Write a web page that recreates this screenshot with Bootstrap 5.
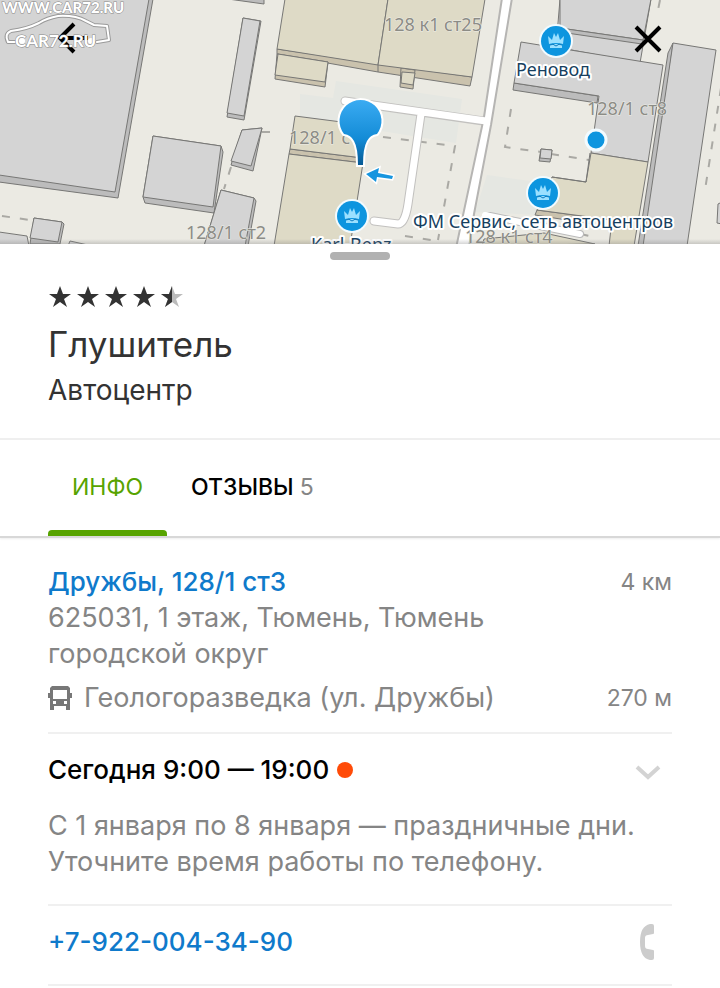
<!DOCTYPE html>
<html lang="ru">
<head>
<meta charset="utf-8">
<meta name="viewport" content="width=device-width, initial-scale=1">
<title>Глушитель — Автоцентр</title>
<link href="https://cdn.jsdelivr.net/npm/bootstrap@5.3.0/dist/css/bootstrap.min.css" rel="stylesheet">
<style>
body{font-family:"Inter","Liberation Sans",sans-serif;font-size:27px;line-height:36px;color:#858585;background:#fff}
.map{height:244px;background:#ebeae3}
.map-btn{position:absolute;top:16px;width:48px;height:48px;border:0;background:none;padding:0}
.map-btn.back{left:48px}
.map-btn.close-map{right:48px}
.brand-mark{position:absolute;left:0;top:0;pointer-events:none}
.grip{width:60px;height:8px;border-radius:4px;background:#b1b1b1}
.px{padding-left:48px;padding-right:48px}
.head{padding-top:24px;padding-bottom:28px;border-bottom:2px solid #efefef;color:#333}
.head h1{font-size:35px;line-height:44px;font-weight:400;margin:12px 0 4px}
.head p{font-size:28px;line-height:40px}
.tabs{border-bottom:2px solid #d8d8d8;box-shadow:0 1px 2px #eee}
.tabs .nav-link{font-size:23px;line-height:32px;padding:31px 24px 27px;border:0;border-bottom:6px solid transparent;border-radius:4px 4px 0 0;color:#000;font-weight:500;position:relative}
.tabs .nav-link.active{color:#57a300;font-weight:400}
.tabs .nav-link.active::after{content:"";position:absolute;left:0;right:0;bottom:-6px;height:6px;background:#57a300;border-radius:4px 4px 0 0}
.tabs .count{color:#858585;font-weight:400}
.line{border-bottom:2px solid #f0f0f0}
.address{padding-top:26px;padding-bottom:16px}
.blue{color:#0f7acb;font-weight:500;font-size:26px;text-decoration:none}
.dist{font-size:23px}
.hours{padding-top:18px;padding-bottom:24px}
.toggle{border:0;background:none;padding:0;color:#000;font-weight:500;font-size:26px;margin-bottom:20px}
.dot{width:16px;height:16px;border-radius:50%;background:#ff4b08}
.call{padding:18px 0 24px}
.lbl{font-family:"Noto Sans",sans-serif;font-size:18px}
.grey-lbl{fill:#8c8c86;stroke:#eeeee8;stroke-width:1px;paint-order:stroke}
.firm-lbl{fill:#173f5f;stroke:#fff;stroke-width:4px;stroke-linejoin:round;paint-order:stroke}
.wm{font-family:"Lato",sans-serif;fill:#fff;paint-order:stroke;stroke:#888;stroke-width:1px}
</style>
<script src="https://cdn.jsdelivr.net/npm/bootstrap@5.3.0/dist/js/bootstrap.bundle.min.js"></script>
</head>
<body>
<header class="map position-relative overflow-hidden">
<svg class="d-block w-100 h-100" viewBox="0 0 720 244" preserveAspectRatio="xMidYMid slice" role="img" aria-label="Карта">
<defs>
<linearGradient id="pin" x1="0" y1="0" x2="0" y2="1"><stop offset="0" stop-color="#3aabf2"/><stop offset=".6" stop-color="#138bd6"/><stop offset="1" stop-color="#075a94"/></linearGradient>
<linearGradient id="shade" x1="0" y1="0" x2="0" y2="1"><stop offset="0" stop-color="#777" stop-opacity="0"/><stop offset="1" stop-color="#777" stop-opacity=".3"/></linearGradient>
<g id="firm"><circle r="17" fill="#f2fbff"/><circle r="15" fill="#0d95df"/><path d="M-8-5l4 4 2-7 2 4 2-4 2 7 4-4-1 8q-7-2-14 0zM-6 4q6-2 12 0v3H-6z" fill="#9be0ff"/><path d="M-6 4q3-2 6 1 3-3 6-1" fill="none" stroke="#0d7bc0"/></g>
</defs>
<rect width="720" height="244" fill="#ebeae3"/>
<path d="M336 81l126 18-6 44-156-25V94l33 4zM487 175l58 8-8 32-62-3z" fill="#e5e7e2"/>
<g fill="none" stroke="#aaa9a4" stroke-width="2" stroke-dasharray="8 10">
<path d="M2 216l28 4M231 167l-7 22M262 132h8M383 137l72 9-17 94M511 109l-6 38 36 5M551 154l38 6M721 88l-16 102M405 236l26 4M660 0l-2 10M563 230l26 6"/>
</g>
<g fill="none" stroke-linecap="round" stroke-linejoin="round">
<path d="M345 101l138 20M421 114l-13 90q-3 20-10 20l-24-3" stroke="#c2c1bf" stroke-width="9"/>
<path d="M502-2l-18 119-28 131h13l5-34 17-89 21-127z" fill="#fff" stroke="#b6b5b3" stroke-width="2"/>
<path d="M345 101l141 20M421 114l-13 90q-3 20-10 20l-24-3" stroke="#fff" stroke-width="7"/>
</g>
<g stroke="#777775" stroke-linejoin="round">
<g fill="#bcbcbc">
<path d="M149-1h4l-35 199L-1 182v-7z"/><path d="M153 136l68 10 2 6-9 61-69-10-2-6z"/><path d="M34 218l28 4 2 2-4 20H30z"/>
<path d="M243 18l18 3-17 99-17-3z"/><path d="M242 130l20-2-9 43-22-6z"/><path d="M221 190l33 8 2 3-8 45h-44z"/><path d="M228-1h36v5z"/>
<path d="M514 83l84 13-1 7-84-13z"/><path d="M673 43l-5 10-30 193h8z"/><path d="M541 149l11 1-2 12-11-1z"/>
</g>
<g fill="#d4d4d4">
<path d="M-1-1h150l-34 193L-1 175z"/><path d="M153 136l68 10-8 61-70-10z"/><path d="M34 218l28 4-4 20-28-4z"/><path d="M-1 232l28 4 2 10H-1z"/><path d="M68 246l2-5 18 4z"/>
<path d="M243 18l17 3-16 95-17-3z"/><path d="M242 130l20-2-11 38-20-5z"/><path d="M221 190l33 8-9 48h-41z"/>
<path d="M560-1h91l-11 64-84-16z"/><path d="M560-1h91l-8 41-83-12z"/><path d="M521 42l142 23-15 97-57-9 8-57-85-13z"/><path d="M673 43l43 7-29 196h-44z"/><path d="M718 204l4-2v22l-5-1z"/><path d="M541 149l11 1-1 9-11-1z"/>
</g>
<path d="M560 28l83 12-1 4-82-12z" fill="#bcbcbc"/>
<g fill="#cac2ad">
<path d="M277 49l195 28-2 9-92-14-101-18z"/><path d="M277 54l51 8-3 25-50-8z"/><path d="M401 68l14 2-2 19-13-2z"/><path d="M290 149l73 9v5l-74-9z"/><path d="M537 210l60 8-5 6-57-9z"/>
</g>
<g fill="#dedac6">
<path d="M285-1h103l-10 66-101-16z"/><path d="M388-1h97l-13 78-94-12z"/><path d="M278 54l50 8-3 20-50-7z"/><path d="M402 72l13 1-2 12-12-2z"/>
<path d="M295 116l70 9-2 33-73-9z"/><path d="M289 154l74 9-13 83h-76z"/><path d="M591 153l57 9-14 84h-25l3-26-75-10 15-33 34 5z"/>
<path d="M482 246l2-7 60-6 51 11z"/>
</g>
<path d="M378 65v7M590 153l-4 29-34-5" fill="none"/>
</g>
<path d="M490 216l90 18" stroke="#bbb" stroke-width="8" stroke-linecap="round"/><path d="M485 215l95 19" stroke="#fff" stroke-width="6" stroke-linecap="round"/>
<g class="lbl grey-lbl"><text x="384" y="31">128 к1 ст25</text><text x="587" y="115">128/1 ст8</text><text x="289" y="144">128/1 ст3</text><text x="186" y="239">128/1 ст2</text><text x="465" y="243">128 к1 ст4</text></g>
<use href="#firm" x="352" y="216"/><use href="#firm" x="556" y="41"/><use href="#firm" x="543" y="193"/>
<circle cx="596" cy="140" r="10" fill="#0d95df" stroke="#f2fbff" stroke-width="3"/>
<path d="M358 165q0-17-4-24-3-6-10-7a21 21 0 1 1 33 0q-7 1-10 7-4 7-4 24z" fill="url(#pin)" stroke="#fff" stroke-width="4" paint-order="stroke"/>
<path d="M366 174l13-6-1 5 15 3-1 3-15-2-1 5z" fill="#1695df" stroke="#fff" stroke-width="3" paint-order="stroke"/>
<g class="lbl firm-lbl"><text x="516" y="76">Реновод</text><text x="413" y="228">ФМ Сервис, сеть автоцентров</text><text x="311" y="251">Karl-Benz</text></g>
<rect y="239" width="720" height="5" fill="url(#shade)"/>
</svg>
<button class="map-btn back" type="button" aria-label="Назад"><svg width="48" height="48" fill="none" stroke="#000" stroke-width="4"><path d="M26 8L12 22l14 14M12 22h28"/></svg></button>
<button class="map-btn close-map" type="button" aria-label="Закрыть"><svg width="48" height="48" fill="none" stroke="#000" stroke-width="4"><path d="M12 11l24 24M36 11L12 35"/></svg></button>
<svg class="brand-mark" width="130" height="60" aria-label="CAR72.RU"><g fill="none" stroke-linecap="round" stroke-linejoin="round"><path d="M15 42H8q-4-8 3-11 16-2 28-8 8-5 19-7 17-1 28 5l8 4 13 1 2 14-12 2" stroke="#999" stroke-width="4"/><path d="M15 42H8q-4-8 3-11 16-2 28-8 8-5 19-7 17-1 28 5l8 4 13 1 2 14-12 2" stroke="#fff" stroke-width="2"/></g><circle cx="22" cy="41" r="3" fill="#fff"/><circle cx="91" cy="41" r="3" fill="#fff"/><text class="wm" x="2" y="13" font-size="15" font-weight="900">WWW.CAR72.RU</text><text class="wm" x="15" y="47" font-size="17" font-weight="700">CAR72.RU</text></svg>
</header>
<main>
<div class="d-flex justify-content-center pt-2"><div class="grip"></div></div>
<section class="head px">
<svg class="d-block" width="140" height="26" role="img" aria-label="Рейтинг 4,5 из 5"><defs><path id="star" d="M12 2l3 8h8l-7 5 3 8-7-5-7 5 3-8-7-5h8z"/><clipPath id="half"><path d="M0 0h12v26H0z"/></clipPath></defs><g fill="#333"><use href="#star"/><use href="#star" x="28"/><use href="#star" x="56"/><use href="#star" x="84"/><use href="#star" x="112" fill="#bbb"/><g transform="translate(112)"><use href="#star" clip-path="url(#half)"/></g></g></svg>
<h1>Глушитель</h1>
<p class="mb-0">Автоцентр</p>
</section>
<nav class="tabs px nav"><a class="nav-link active" href="#info" aria-current="page">ИНФО</a><a class="nav-link" href="#reviews">ОТЗЫВЫ <span class="count">5</span></a></nav>
<div class="px" id="info">
<section class="address line">
<div class="d-flex justify-content-between"><a class="blue" href="#map">Дружбы, 128/1 ст3</a><span class="dist">4 км</span></div>
<div class="row"><div class="col-9">625031, 1 этаж, Тюмень, Тюмень городской округ</div></div>
<div class="d-flex align-items-center pt-2"><svg class="me-2 flex-shrink-0" width="28" height="24" viewBox="0 0 28 24" aria-hidden="true"><path fill="#777" fill-rule="evenodd" d="M4 0h16l2 2v5h2v5h-2v12h-4v-4H6v4H2V12H0V7h2V2zM5 4v9h14V4zM5 15v3h3v-3zM16 15v3h3v-3z"/></svg><span class="flex-grow-1">Геологоразведка (ул. Дружбы)</span><span class="dist">270 м</span></div>
</section>
<section class="hours line">
<button class="toggle d-flex align-items-center w-100" type="button"><span class="me-2">Сегодня 9:00 — 19:00</span><span class="dot"></span><svg class="ms-auto me-2" width="32" height="24" fill="none" stroke="#d3d3d3" stroke-width="4" aria-hidden="true"><path d="M5 9l11 10L27 9"/></svg></button>
<div>С 1 января по 8 января — праздничные дни.<br>Уточните время работы по телефону.</div>
</section>
<section class="call line d-flex justify-content-between align-items-center"><a class="blue" href="tel:+79220043490">+7-922-004-34-90</a><svg class="me-3" width="16" height="36" viewBox="0 0 16 36" aria-hidden="true"><path fill="#ccc" d="M10 0h2q2 0 2 2v7q0 1-1 1l-5 1q-3 0-3 3v8q0 3 3 3l5 1q1 0 1 1v7q0 2-2 2h-2Q0 34 0 18T10 0z"/></svg></section>
</div>
</main>
</body>
</html>
